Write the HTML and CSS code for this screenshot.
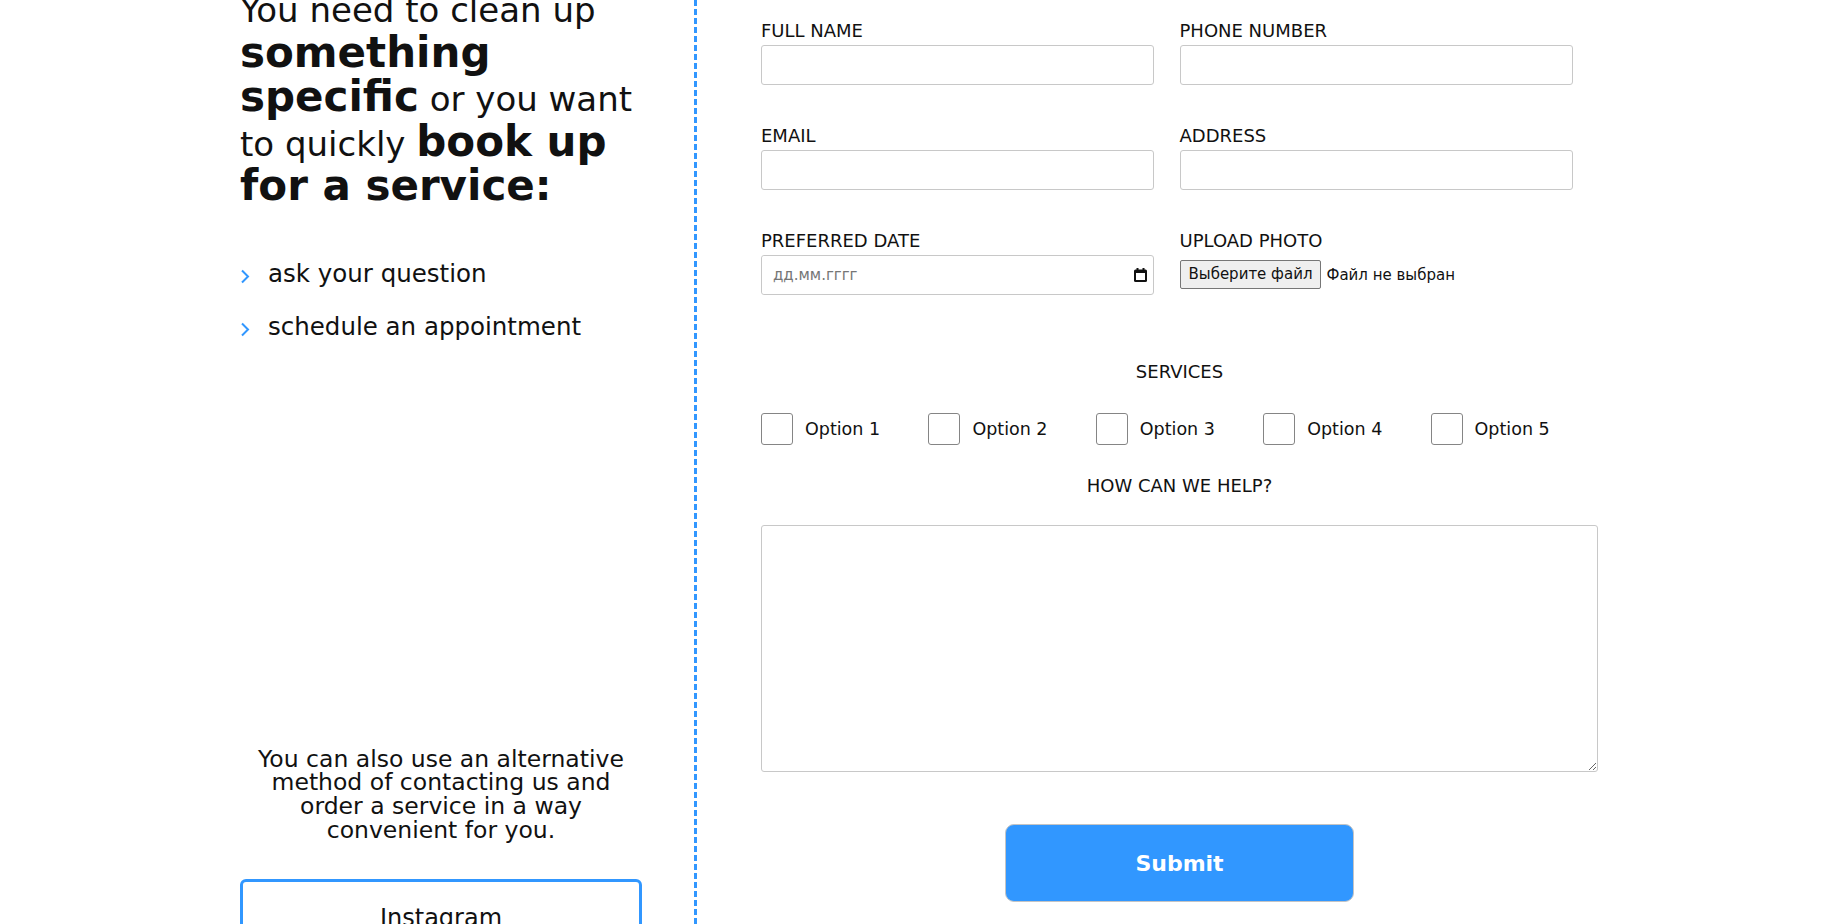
FILE: index.html
```html
<!DOCTYPE html>
<html lang="en">
  <head>
    <meta charset="UTF-8" />
    <meta name="viewport" content="width=device-width, initial-scale=1" />
    <title>Order a service</title>
    <link rel="stylesheet" href="styles.css">
  </head>
  <body>
    <div class="page">
      <aside class="intro">
        <h2 class="intro-title">You need to clean up <b>something specific</b> or you want to quickly <b>book up for a service:</b></h2>
        <ul class="intro-list">
          <li><svg class="chevron" width="10" height="15" viewBox="0 0 10 15"><path d="M2 1.5 L8 7.5 L2 13.5" fill="none" stroke="#3197ff" stroke-width="2"/></svg>ask your question</li>
          <li><svg class="chevron" width="10" height="15" viewBox="0 0 10 15"><path d="M2 1.5 L8 7.5 L2 13.5" fill="none" stroke="#3197ff" stroke-width="2"/></svg>schedule an appointment</li>
        </ul>
        <p class="intro-alt">You can also use an alternative method of contacting us and order a service in a way convenient for you.</p>
        <a class="social-btn" href="#">Instagram</a>
      </aside>

      <div class="divider"></div>

      <form class="order-form" onsubmit="return false;">
        <div class="fields">
          <div class="field">
            <label for="fullName">FULL NAME</label>
            <input type="text" id="fullName" />
          </div>
          <div class="field">
            <label for="phone">PHONE NUMBER</label>
            <input type="tel" id="phone" />
          </div>
          <div class="field">
            <label for="email">EMAIL</label>
            <input type="email" id="email" />
          </div>
          <div class="field">
            <label for="address">ADDRESS</label>
            <input type="text" id="address" />
          </div>
          <div class="field">
            <label for="date">PREFERRED DATE</label>
            <div class="date-box">
              <input type="text" id="date" placeholder="дд.мм.гггг" />
              <svg width="13" height="14" viewBox="0 0 13 14"><rect x="0" y="1.5" width="13" height="12.5" rx="1.5" fill="#111"/><rect x="2" y="5" width="9" height="7" fill="#fff"/><rect x="2.5" y="0" width="2" height="3" fill="#111"/><rect x="8.5" y="0" width="2" height="3" fill="#111"/></svg>
            </div>
          </div>
          <div class="field">
            <label>UPLOAD PHOTO</label>
            <div class="file-box">
              <label class="file-btn" for="photo">Выберите файл</label>
              <span class="file-name">Файл не выбран</span>
              <input type="file" id="photo" class="file-input" />
            </div>
          </div>
        </div>

        <p class="form-heading">SERVICES</p>
        <div class="options">
          <label class="option"><input type="checkbox" /> Option 1</label>
          <label class="option"><input type="checkbox" /> Option 2</label>
          <label class="option"><input type="checkbox" /> Option 3</label>
          <label class="option"><input type="checkbox" /> Option 4</label>
          <label class="option"><input type="checkbox" /> Option 5</label>
        </div>

        <p class="form-heading">HOW CAN WE HELP?</p>
        <textarea class="message"></textarea>

        <button type="submit" class="submit-btn">Submit</button>
      </form>
    </div>
  </body>
</html>
```

FILE: styles.css
```css
html, body {
  margin: 0;  overflow: hidden;
}
body {
  font-family: "DejaVu Sans", sans-serif;  color: #111;  background-color: #fff;
}
.page {
  display: flex;  min-height: 100vh;  padding-left: 240px;
}
.intro {
  width: 402px;  flex-shrink: 0;
}
.intro-title {
  margin: -10px 0 0;  font-size: 34px;  font-weight: normal;  line-height: 41.5px;
}
.intro-title b {
  font-size: 42px;  font-weight: bold;
}
.intro-list {
  list-style: none;  margin: 49px 0 0;  padding: 0;
}
.intro-list li {
  display: flex;  align-items: center;  font-size: 24.5px;  line-height: 30px;  margin-bottom: 23px;
}
.chevron {
  margin: 6px 18px 0 0;  flex-shrink: 0;
}
.intro-alt {
  margin: 406px 0 0;  padding: 0 10px;  font-size: 23.5px;  line-height: 23.7px;  text-align: center;
}
.social-btn {
  display: block;  margin-top: 37px;  padding: 21px 0;  border: 3px solid #3197ff;  border-radius: 6px;
  font-size: 24px;  line-height: 30px;  color: #111;  text-align: center;  text-decoration: none;
}
.divider {
  width: 3px;  margin-left: 52px;  flex-shrink: 0;
  background: repeating-linear-gradient(to bottom, #3197ff 0, #3197ff 6px, transparent 6px, transparent 9px);
}
.order-form {
  width: 837px;  margin-left: 64px;  padding-top: 20px;
}
.fields {
  display: grid;  grid-template-columns: 1fr 1fr;  row-gap: 40px;
}
.field label {
  display: block;  font-size: 18px;  line-height: 22px;  margin-bottom: 3px;
}
.field input[type="text"],
.field input[type="tel"],
.field input[type="email"] {
  box-sizing: border-box;  width: 393px;  height: 40px;  border: 1px solid #c8c8c8;  border-radius: 3px;
  padding: 0 11px;  font-family: inherit;  font-size: 15px;  outline: none;
}
.date-box {
  box-sizing: border-box;  width: 393px;  height: 40px;  display: flex;  align-items: center;
  border: 1px solid #c8c8c8;  border-radius: 3px;  padding-right: 6px;
}
.date-box input[type="text"] {
  flex: 1;  height: 38px;  border: none;  width: auto;
}
.date-box input::placeholder {
  color: #767676;
}
.file-box {
  display: flex;  align-items: center;  gap: 5px;  margin-top: 8px;  font-size: 15px;
}
.field .file-btn {
  display: inline-block;  margin: 0;  padding: 4px 8px;  font-size: 15px;  line-height: 19px;
  background-color: #efefef;  border: 1px solid #767676;  border-radius: 2px;  cursor: pointer;
}
.file-input {
  display: none;
}
.form-heading {
  margin: 0;  font-size: 18px;  line-height: 22px;  text-align: center;
}
.fields + .form-heading {
  margin-top: 66px;
}
.options {
  display: grid;  grid-template-columns: repeat(5, 1fr);  margin: 30px 0;
}
.option {
  display: flex;  align-items: center;  gap: 12px;  font-size: 17.5px;
}
.option input {
  appearance: none;  width: 32px;  height: 32px;  margin: 0;  border: 1px solid #858585;  border-radius: 3px;  background: #fff;
}
.option input:checked {
  background-color: #3197ff;  border-color: #3197ff;
}
.message {
  display: block;  box-sizing: border-box;  width: 837px;  height: 247px;  margin-top: 28px;
  border: 1px solid #c8c8c8;  border-radius: 3px;  font-family: inherit;  font-size: 16px;
}
.submit-btn {
  display: block;  width: 349px;  height: 78px;  margin: 52px auto 0;
  background-color: #3197ff;  color: #fff;  border: 1px solid #c4c4c4;  border-radius: 9px;
  font-family: inherit;  font-size: 22px;  font-weight: bold;  cursor: pointer;
}
.submit-btn:hover {
  background-color: #1f86ef;
}
```
